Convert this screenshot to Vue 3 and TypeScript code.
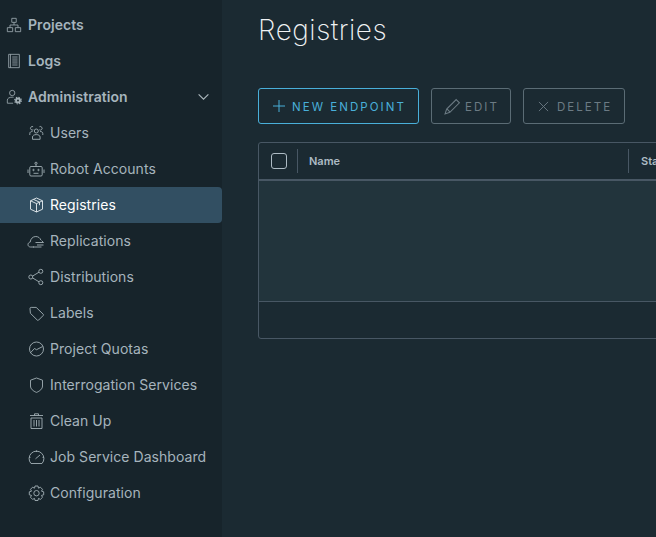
<script setup lang="ts">
interface NavItem { label: string; icon: string; active?: boolean }
const topItems: NavItem[] = [
  { label: 'Projects', icon: 'projects' },
  { label: 'Logs', icon: 'logs' },
]
const subItems: NavItem[] = [
  { label: 'Users', icon: 'users' },
  { label: 'Robot Accounts', icon: 'robot' },
  { label: 'Registries', icon: 'box', active: true },
  { label: 'Replications', icon: 'cloud' },
  { label: 'Distributions', icon: 'share' },
  { label: 'Labels', icon: 'tag' },
  { label: 'Project Quotas', icon: 'quota' },
  { label: 'Interrogation Services', icon: 'shield' },
  { label: 'Clean Up', icon: 'trash' },
  { label: 'Job Service Dashboard', icon: 'gauge' },
  { label: 'Configuration', icon: 'gear' },
]
const paths: Record<string, string> = {
  projects: 'M6.500 1.500h5v4.500h-5zM1.500 12h6v4.500h-6zM10.500 12h6v4.500h-6zM9 6V9M4.500 12V9h9v3',
  logs: 'M3 1.500h12v15H3zM5 1.500v15M7 4.500h6M7 6.800h6M7 9h6M7 11.200h6M7 13.500h6',
  users: 'M9.300 5a2 2 0 1 1 0 4a2 2 0 0 1 0-4zM6.300 5.800a1.800 1.800 0 1 1-.2-3.100M12.300 5.800a1.800 1.800 0 1 0 .2-3.100M2.800 11V9.500c0-1.300 1-2 2.700-2M15.800 11V9.500c0-1.300-1-2-2.700-2M5.500 15.300V13c0-1.400 1.600-2.400 3.800-2.400s3.800 1 3.800 2.400v2.300z',
  robot: 'M4 6.500h10a1.200 1.200 0 0 1 1.200 1.200v7.100a1.200 1.200 0 0 1-1.200 1.200H4a1.200 1.200 0 0 1-1.200-1.200V7.700A1.200 1.200 0 0 1 4 6.500zM9 6.500V4.500M1 9.500v3.500M17 9.500v3.500M6.500 13.300h5',
  box: 'M9.500 2l6 2.800v8.400l-6 2.800-6-2.800V4.800zM3.500 4.800l6 2.800 6-2.800M9.500 7.600V16M6.500 3.400l6 2.800v3',
  cloud: 'M7 15H3.500C2 15 1 13.900 1 12.600c0-1.300.9-2.300 2.200-2.500C3.500 6.800 5.800 4.500 8.800 4.500c2.400 0 4.300 1.400 5 3.500M6 15h8.500M8.500 10.500h8M14.500 8.500l2 2M10 13h6.500',
  share: 'M5.700 8L12 4.200M5.700 10l6.300 3.800',
  tag: 'M3 4.600a1.200 1.200 0 0 1 1.200-1.200h5l7 6.800a.9.900 0 0 1 0 1.300l-4.600 4.600a.9.900 0 0 1-1.300 0L3.400 9.300z',
  quota: 'M9.500 2a7 7 0 1 1 0 14a7 7 0 0 1 0-14zM3.500 12.700L7.500 8.500l2 1.200 6.200-3.200',
  shield: 'M9.500 2l6 2.200v5.800c0 2.900-2.700 5.100-6 6.400-3.300-1.300-6-3.500-6-6.400V4.200z',
  trash: 'M4 6h11v10.500H4zM3 3.500h13M7.500 3.500V1.800h4v1.700M7 8v6.500M9.500 8v6.500M12 8v6.500',
  gauge: 'M4 15.500a7.400 7.400 0 1 1 11 0zM8.500 10.800l4.500-3.800M2 9.300h1.500M15.500 9.300H17M9.500 2.500V4',
  gear: 'M8 2h3l.5 2.200 1.900-1 2.100 2.100-1 1.900 2.200.6v3l-2.200.6 1 1.900-2.100 2.100-1.900-1L11 16.500H8l-.5-2.100-1.900 1-2.100-2.100 1-1.900-2.200-.6v-3l2.200-.6-1-1.900 2.100-2.100 1.900 1zM9.500 6.500a2.700 2.700 0 1 1 0 5.400a2.700 2.700 0 0 1 0-5.400z',
}
</script>

<template>
  <div class="page">
    <aside class="sidebar">
      <a v-for="item in topItems" :key="item.label" class="row top">
        <svg class="icon" viewBox="0 0 18 18"><path :d="paths[item.icon]" /></svg>
        <span>{{ item.label }}</span>
      </a>
      <a class="row top">
        <svg class="icon" viewBox="0 0 18 18">
          <path d="M7 1.500a3 3 0 1 1 0 6a3 3 0 0 1 0-6zM1.500 16v-3.500c0-2 2.300-3.300 5.500-3.300c.5 0 1 0 1.500.1M1.500 16h6.500" />
          <circle cx="13.500" cy="13" r="2.200" fill="none" stroke-width="2.200" />
          <circle cx="13.500" cy="13" r="3.800" fill="none" stroke-width="1.200" stroke-dasharray="1.500 1.500" />
        </svg>
        <span>Administration</span>
        <svg class="chevron" viewBox="0 0 14 9"><path d="M1.500 1.500L7 7l5.500-5.500" /></svg>
      </a>
      <a v-for="item in subItems" :key="item.label" class="row sub" :class="{ active: item.active }">
        <svg class="icon" viewBox="0 0 18 18">
          <path :d="paths[item.icon]" />
          <template v-if="item.icon === 'share'">
            <circle cx="3.800" cy="9" r="2" /><circle cx="13.800" cy="3.300" r="2" /><circle cx="13.800" cy="14.700" r="2" />
          </template>
          <template v-if="item.icon === 'robot'">
            <circle cx="9" cy="3.300" r="1.100" /><circle cx="6.500" cy="10" r=".7" /><circle cx="11.500" cy="10" r=".7" />
          </template>
        </svg>
        <span>{{ item.label }}</span>
      </a>
    </aside>

    <main class="main">
      <h1>Registries</h1>
      <div class="actions">
        <button class="btn primary">
          <svg class="btn-icon plus" viewBox="0 0 12 12"><path d="M6 0v12M0 6h12" /></svg>
          <span>NEW ENDPOINT</span>
        </button>
        <button class="btn edit-btn">
          <svg class="btn-icon edit" viewBox="0 0 16 16"><path d="M11.500 1.500l3 3L5.500 13.500 1 15l1.500-4.500zM3 10.500l2.500 2.500" /></svg>
          <span>EDIT</span>
        </button>
        <button class="btn delete-btn">
          <svg class="btn-icon x" viewBox="0 0 12 12"><path d="M1 1l10 10M11 1L1 11" /></svg>
          <span>DELETE</span>
        </button>
      </div>
      <div class="grid">
        <div class="grid-head">
          <div class="cell check"><span class="box"></span></div>
          <div class="cell name">Name</div>
          <div class="cell status">Status</div>
        </div>
        <div class="grid-body"></div>
        <div class="grid-foot"></div>
      </div>
    </main>
  </div>
</template>

<style>
html, body { margin: 0; background: #1b2a32; overflow: hidden; }
</style>

<style scoped>
.page {
  display: flex;
  width: 656px;
  height: 537px;
  overflow: hidden;
  font-family: Inter, "Open Sans", sans-serif;
  background: #1b2a32;
}
.sidebar {
  flex: 0 0 222px;
  box-sizing: border-box;
  padding-top: 7px;
  background: #17242b;
}
.row {
  display: flex;
  align-items: center;
  height: 36px;
  box-sizing: border-box;
  font-size: 14px;
  color: #a6b4bd;
  letter-spacing: 0.05px;
}
.row span { margin-bottom: 2px; }
.top { padding-left: 6px; font-weight: 600; gap: 6px; }
.sub { padding-left: 27px; gap: 5px; font-weight: 400; }
.active {
  background: #324f62;
  color: #ffffff;
  border-radius: 0 4px 4px 0;
}
.icon {
  width: 16px;
  height: 16px;
  flex: none;
  fill: none;
  stroke: #a3b0b6;
  stroke-width: 0.9;
}
.sub .icon { width: 18px; height: 18px; }
.active .icon { stroke: #e6edf0; }
.chevron {
  width: 13px;
  height: 8px;
  margin-left: auto;
  margin-right: 12px;
  fill: none;
  stroke: #aab6bb;
  stroke-width: 1.300;
}
.main {
  flex: 1;
  min-width: 0;
  padding-left: 36px;
}
h1 {
  margin: 13px 0 0;
  height: 34px;
  font-size: 28px;
  line-height: 34px;
  font-weight: 200;
  letter-spacing: 0.5px;
  color: #f0f2f4;
}
.actions {
  display: flex;
  gap: 12px;
  margin-top: 41px;
}
.btn {
  display: flex;
  align-items: center;
  height: 36px;
  padding: 0 0 0 14px;
  box-sizing: border-box;
  background: transparent;
  border: 1px solid #5b6c75;
  border-radius: 3px;
  font: 400 11.500px Inter, sans-serif;
  letter-spacing: 2.050px;
  color: #6c7b84;
  white-space: nowrap;
}
.btn span { margin-top: 1px; }
.primary { border-color: #49afd9; color: #49afd9; width: 161px; gap: 7px; }
.edit-btn { width: 80px; padding-left: 12px; gap: 4px; }
.delete-btn { width: 102px; gap: 8px; }
.btn-icon {
  flex: none;
  fill: none;
  stroke: #6c7b84;
  stroke-width: 1;
}
.primary .btn-icon { stroke: #49afd9; }
.btn-icon.plus { width: 12px; height: 12px; }
.btn-icon.edit { width: 17px; height: 17px; }
.btn-icon.x { width: 11px; height: 11px; }
.grid {
  width: 560px;
  margin-top: 18px;
  box-sizing: border-box;
  border: 1px solid #485764;
  border-radius: 3px;
}
.grid-head {
  display: flex;
  align-items: center;
  height: 36px;
  border-bottom: 2px solid #485764;
  font-size: 11px;
  font-weight: 600;
  color: #adbbc4;
}
.cell { height: 24px; display: flex; align-items: center; }
.check { width: 39px; padding-left: 12px; box-sizing: border-box; border-right: 1px solid #485764; }
.box {
  width: 14px;
  height: 14px;
  flex: none;
  border: 1px solid #adbbc4;
  border-radius: 3px;
}
.name { width: 331px; padding-left: 11px; box-sizing: border-box; border-right: 1px solid #485764; }
.status { padding-left: 12px; }
.grid-body { height: 120px; background: #22343c; border-bottom: 1px solid #485764; }
.grid-foot { height: 36px; }
</style>
